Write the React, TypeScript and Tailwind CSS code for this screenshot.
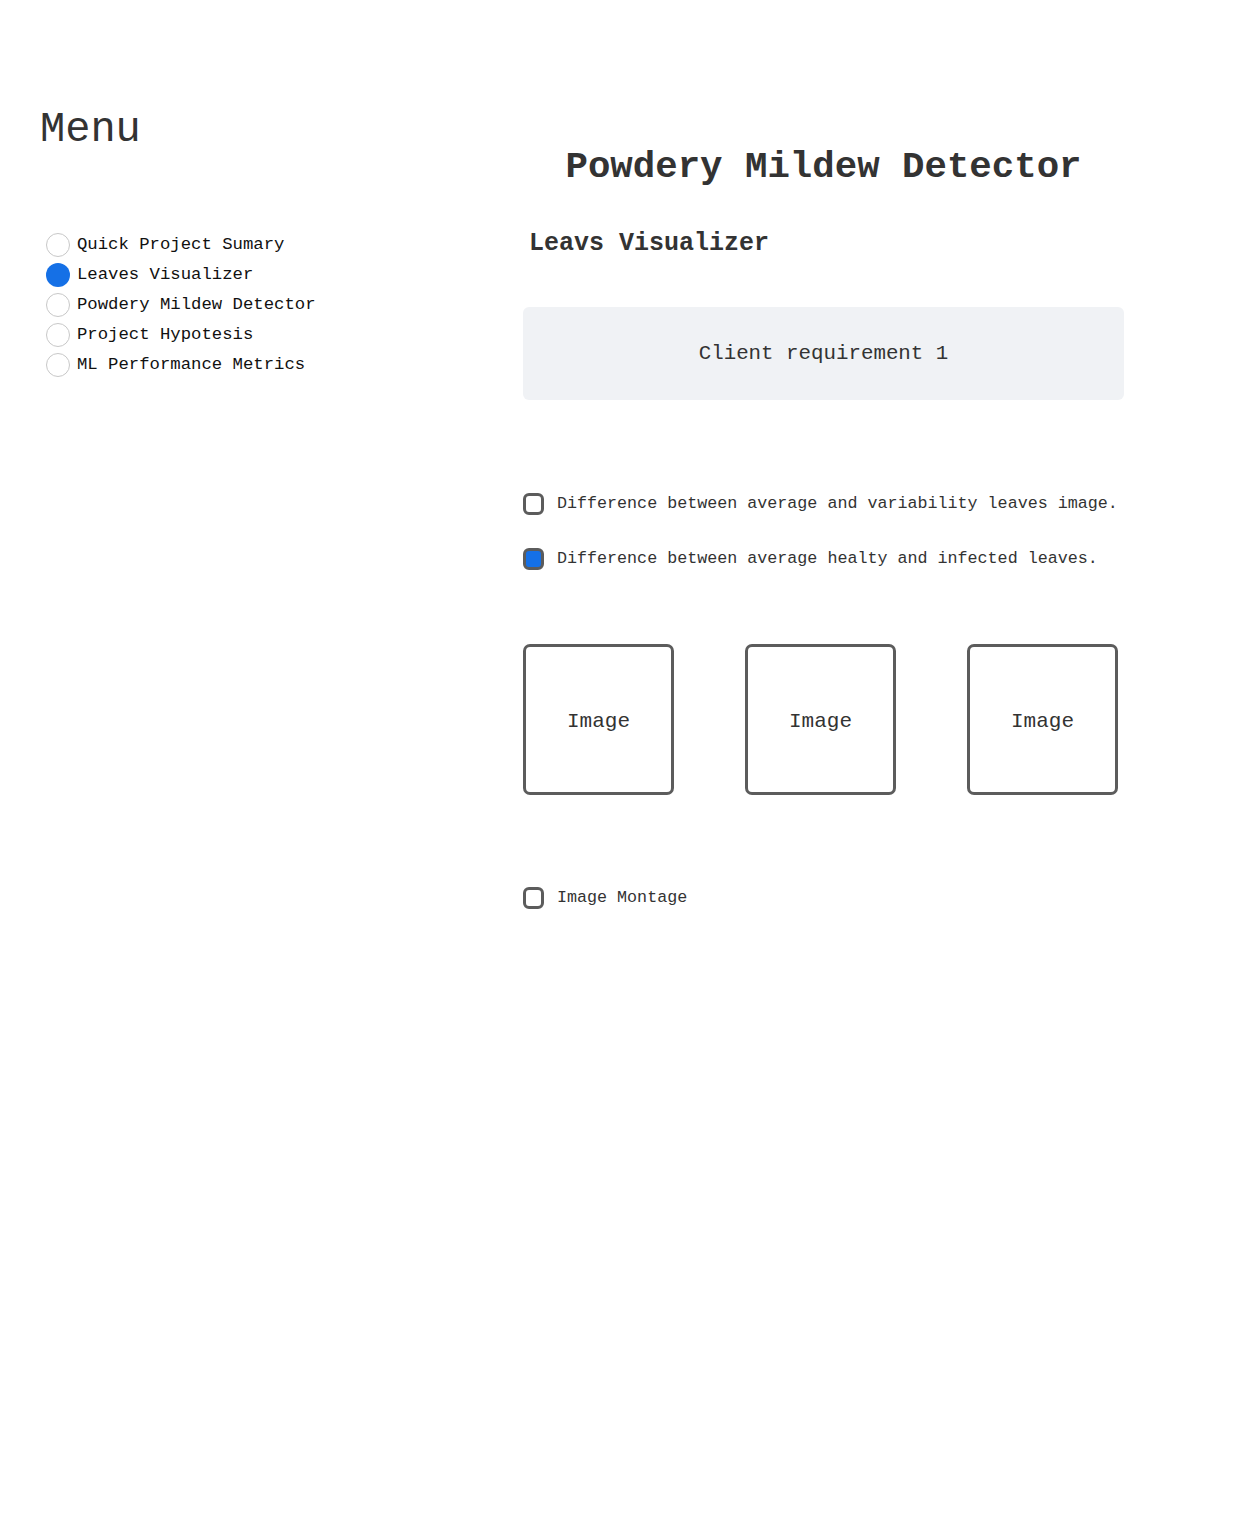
import React, { useState } from 'react';

const pages = [
  'Quick Project Sumary',
  'Leaves Visualizer',
  'Powdery Mildew Detector',
  'Project Hypotesis',
  'ML Performance Metrics',
];

const Checkbox = ({ checked, label, onChange }: { checked: boolean; label: string; onChange: () => void }) => (
  <label className="flex items-center gap-[13px] cursor-pointer" onClick={onChange}>
    <span
      className={`w-[21px] h-[22px] rounded-[6px] border-[3px] border-[#5c5c5c] ${checked ? 'bg-[#1570e6]' : 'bg-white'}`}
    />
    <span className="text-[16.7px] text-[#333]">{label}</span>
  </label>
);

const App = () => {
  const [page, setPage] = useState(1);
  const [diffAvg, setDiffAvg] = useState(false);
  const [diffHealthy, setDiffHealthy] = useState(true);
  const [montage, setMontage] = useState(false);

  return (
    <div className="min-h-[1535px] bg-white flex font-['Liberation_Mono',monospace]">
      {/* Sidebar */}
      <div className="w-[523px] shrink-0 pl-[40px] pt-[105px]">
        <h2 className="text-[42px] leading-[50px] text-[#333]">Menu</h2>
        <div className="mt-[78px] pl-[6px] flex flex-col gap-[6px]">
          {pages.map((p, i) => (
            <div key={p} className="flex items-center gap-[7px] h-[24px] cursor-pointer" onClick={() => setPage(i)}>
              <span
                className={`w-[24px] h-[24px] rounded-full ${page === i ? 'bg-[#1570e6]' : 'border border-[#c8c8c8] bg-white'}`}
              />
              <span className="text-[17.3px] text-[#111]">{p}</span>
            </div>
          ))}
        </div>
      </div>

      {/* Main */}
      <div className="w-[601px] pt-[143px]">
        <h1 className="text-center font-bold text-[37.4px] leading-[48px] text-[#333]">Powdery Mildew Detector</h1>
        <h3 className="mt-[37px] pl-[6px] font-bold text-[25px] leading-[32px] text-[#333]">Leavs Visualizer</h3>
        <div className="mt-[47px] h-[93px] rounded-[6px] bg-[#f0f2f5] flex items-center justify-center">
          <span className="text-[20.8px] text-[#333]">Client requirement 1</span>
        </div>

        <div className="mt-[91px] flex flex-col gap-[30px]">
          <Checkbox
            checked={diffAvg}
            label="Difference between average and variability leaves image."
            onChange={() => setDiffAvg(!diffAvg)}
          />
          <Checkbox
            checked={diffHealthy}
            label="Difference between average healty and infected leaves."
            onChange={() => setDiffHealthy(!diffHealthy)}
          />
        </div>

        <div className="mt-[73px] flex gap-[71px]">
          {[0, 1, 2].map(i => (
            <div
              key={i}
              className="w-[151px] h-[151px] rounded-[7px] border-[3px] border-[#5c5c5c] flex items-center justify-center pt-[5px]"
            >
              <span className="text-[21px] text-[#333]">Image</span>
            </div>
          ))}
        </div>

        <div className="mt-[90px]">
          <Checkbox checked={montage} label="Image Montage" onChange={() => setMontage(!montage)} />
        </div>
      </div>
    </div>
  );
};

export default App;
